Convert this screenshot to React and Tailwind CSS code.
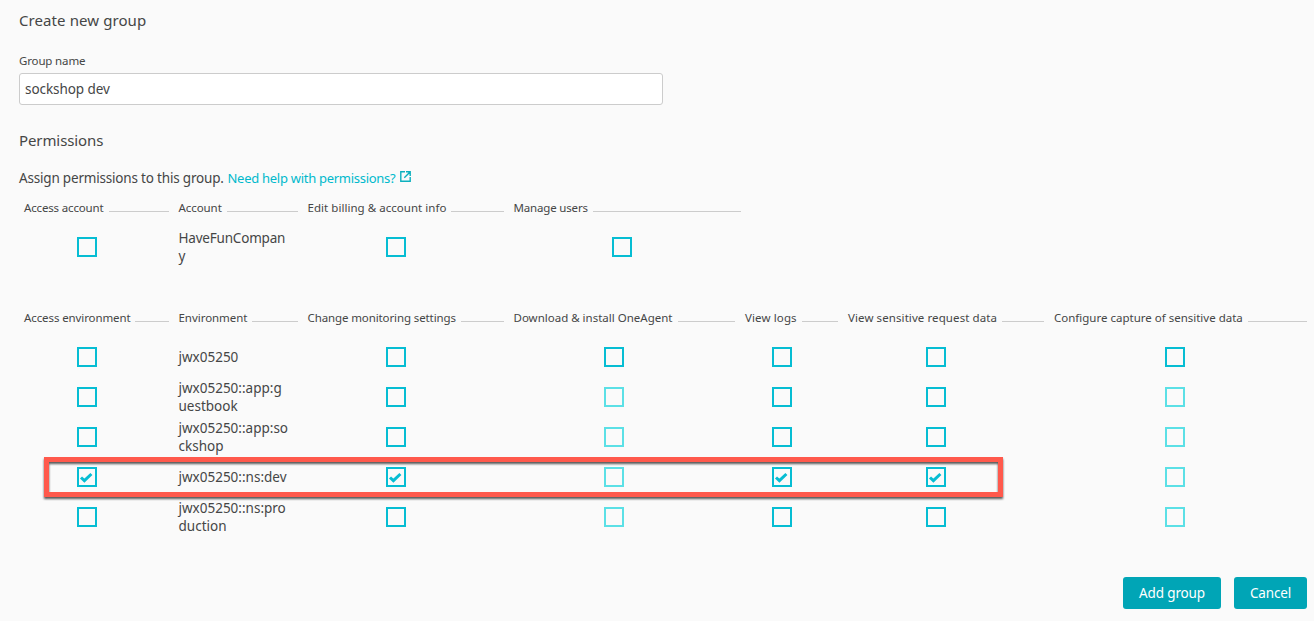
import React from "react";

const accountColumns = [
  { label: "Access account", width: "w-[80px] tracking-[-0.16px]" },
  { label: "Account", width: "w-[43.5px] tracking-[-0.07px]" },
  { label: "Edit billing & account info", width: "w-[138.5px] tracking-[0.04px]" },
  { label: "Manage users", width: "w-[74px] tracking-[-0.17px]" },
];

const environmentColumns = [
  { label: "Access environment", width: "w-[106px] tracking-[-0.1px]" },
  { label: "Environment", width: "w-[68.5px] tracking-[-0.04px]" },
  { label: "Change monitoring settings", width: "w-[148px] tracking-[-0.11px]" },
  { label: "Download & install OneAgent", width: "w-[159.5px]" },
  { label: "View logs", width: "w-[52px] tracking-[0.12px]" },
  { label: "View sensitive request data", width: "w-[149px] tracking-[0.09px]" },
  { label: "Configure capture of sensitive data", width: "w-[189px]" },
];

const environments = [
  { lines: ["jwx05250"], checks: ["off", "off", "off", "off", "off", "off"] },
  { lines: ["jwx05250::app:g", "uestbook"], checks: ["off", "off", "disabled", "off", "off", "disabled"] },
  { lines: ["jwx05250::app:so", "ckshop"], checks: ["off", "off", "disabled", "off", "off", "disabled"] },
  { lines: ["jwx05250::ns:dev"], checks: ["on", "on", "disabled", "on", "on", "disabled"], highlighted: true },
  { lines: ["jwx05250::ns:pro", "duction"], checks: ["off", "off", "disabled", "off", "off", "disabled"] },
];

const accountGrid = "grid grid-cols-[154.5px_129px_206px_237px]";
const environmentGrid = "grid grid-cols-[154.5px_129px_206px_231.5px_103px_206px_263px]";

function HeaderCell({ label, width }) {
  return (
    <div className="flex h-4 px-[5px] text-[11.5px] leading-[15px] text-[#454646]">
      <span className={`shrink-0 whitespace-nowrap ${width}`}>{label}</span>
      <span className="mt-[11px] ml-[5px] h-px grow bg-[#cccccc]" />
    </div>
  );
}

function Checkbox({ state = "off", label }) {
  return (
    <span
      role="checkbox"
      aria-checked={state === "on"}
      aria-disabled={state === "disabled"}
      aria-label={label}
      className={`block h-5 w-5 shrink-0 border-2 ${state === "disabled" ? "border-[#5be0e6]" : "border-[#06bdd3]"}`}
    >
      {state === "on" && (
        <svg viewBox="0 0 16 16" className="block h-4 w-4">
          <path d="M2 8.5 L5.4 11.7 L12.4 5" fill="none" stroke="#06bdd3" strokeWidth="3" />
        </svg>
      )}
    </span>
  );
}

function CheckCell({ state, label, offset = "pr-[20px]" }) {
  return (
    <div className={`flex items-center justify-center ${offset}`}>
      <Checkbox state={state} label={label} />
    </div>
  );
}

function NameCell({ lines, tracking = "tracking-[0px]" }) {
  return (
    <div className={`flex flex-col justify-center px-[5px] text-[13.5px] leading-[18px] ${tracking}`}>
      {lines.map((line) => (
        <span key={line} className="whitespace-nowrap">{line}</span>
      ))}
    </div>
  );
}

function EnvironmentRow({ lines, checks, highlighted }) {
  return (
    <div className={`relative h-10 ${environmentGrid}`}>
      <CheckCell state={checks[0]} label={environmentColumns[0].label} offset="pr-[19px]" />
      <NameCell lines={lines} />
      {checks.slice(1).map((state, i) => (
        <CheckCell key={i} state={state} label={environmentColumns[i + 2].label} offset={i === 4 ? "pr-[11px]" : "pr-[20px]"} />
      ))}
      {highlighted && (
        <div className="pointer-events-none absolute top-0 left-[25px] h-10 w-[959px] border-5 border-[#ff594c] drop-shadow-[0_2px_1px_rgba(0,0,0,0.65)]" />
      )}
    </div>
  );
}

export default function App() {
  return (
    <main className="flex h-[621px] w-[1314px] flex-col overflow-hidden bg-[#fafafa] pl-[19px] font-['Noto_Sans',sans-serif] text-[#454646]">
      <h1 className="mt-[11px] h-5 text-[15px] leading-[18px] tracking-[0.09px]">Create new group</h1>
      <label htmlFor="group-name" className="mt-[22px] h-4 text-[11.5px] leading-[15px] tracking-[-0.15px]">Group name</label>
      <input
        id="group-name"
        defaultValue="sockshop dev"
        className="mt-1 h-8 w-[644px] rounded-[3px] border border-[#cccccc] bg-white px-[5px] text-[13.5px] tracking-[-0.07px] outline-none"
      />
      <h2 className="mt-[26px] h-5 text-[15px] leading-[18px] tracking-[-0.1px]">Permissions</h2>
      <p className="mt-[17px] flex h-5 text-[13.5px] leading-5">
        <span className="w-[208.5px] shrink-0 whitespace-nowrap tracking-[-0.19px]">Assign permissions to this group.</span>
        <a className="flex text-[#00b9cc]">
          <span className="w-[168px] whitespace-nowrap text-[13px] tracking-[-0.28px]">Need help with permissions?</span>
          <svg viewBox="0 0 11 11" className="mt-[3px] ml-[4px] h-[11px] w-[11px]" fill="none" stroke="#0cb0be" strokeWidth="1.4">
            <path d="M5 .8H.8V10.2H10.2V6M6 .8H10.2V5M10 1L4.3 6.7" />
          </svg>
        </a>
      </p>
      <div className={`mt-3 ${accountGrid}`}>
        {accountColumns.map((c) => <HeaderCell key={c.label} {...c} />)}
      </div>
      <div className={`mt-[11px] h-10 ${accountGrid}`}>
        <CheckCell label="Access account" offset="pr-[19px]" />
        <NameCell lines={["HaveFunCompan", "y"]} tracking="tracking-[-0.2px]" />
        <CheckCell label="Edit billing & account info" />
        <CheckCell label="Manage users" offset="pr-[10px]" />
      </div>
      <div className={`mt-[43px] ${environmentGrid}`}>
        {environmentColumns.map((c) => <HeaderCell key={c.label} {...c} />)}
      </div>
      <div className="mt-[11px]">
        {environments.map((e) => <EnvironmentRow key={e.lines[0]} {...e} />)}
      </div>
      <div className="mt-10 flex justify-end gap-[13px] pr-[7px] text-[13.5px] tracking-[-0.15px] text-white">
        <button className="h-8 w-[98px] rounded-[3px] bg-[#00a5b6]">Add group</button>
        <button className="h-8 w-[73px] rounded-[3px] bg-[#00a5b6]">Cancel</button>
      </div>
    </main>
  );
}
